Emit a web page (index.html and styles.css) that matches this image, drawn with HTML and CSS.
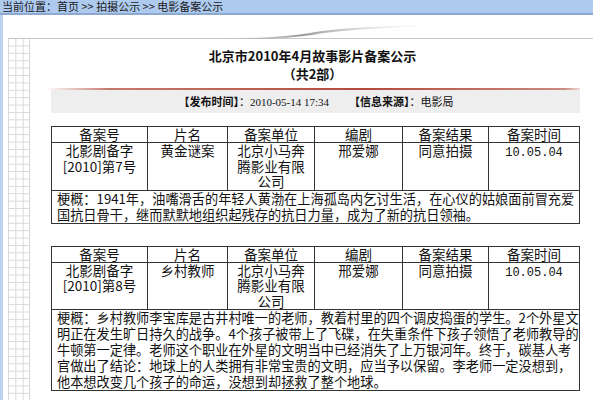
FILE: index.html
```html
<!DOCTYPE html>
<html lang="zh-CN">
<head>
<meta charset="utf-8">
<title>电影备案公示</title>
<link rel="stylesheet" href="styles.css">
</head>
<body>
<div class="crumb">当前位置：首页 &gt;&gt; 拍摄公示 &gt;&gt; 电影备案公示</div>
<div class="page">
  <div class="side"></div>
  <div class="panel">
    <svg class="swoosh" width="200" height="16" viewBox="0 0 200 16">
      <defs>
        <linearGradient id="sw" x1="0" x2="1" y1="0" y2="0">
          <stop offset="0" stop-color="#9a9a9a" stop-opacity="0"/>
          <stop offset="0.35" stop-color="#8c8c8c" stop-opacity="0.9"/>
          <stop offset="0.6" stop-color="#b0b0b0" stop-opacity="0.6"/>
          <stop offset="1" stop-color="#d0d0d0" stop-opacity="0"/>
        </linearGradient>
      </defs>
      <path d="M0,15 Q50,15 80,10 Q110,4 200,2 L200,3 Q112,6 82,12 Q50,16.5 0,16 Z" fill="url(#sw)"/>
    </svg>
    <div class="frame">
      <div class="grid"></div>
      <div class="content">
        <h1 class="title">北京市2010年4月故事影片备案公示</h1>
        <div class="subtitle">（共2部）</div>
        <div class="redline"></div>
        <div class="meta"><b>【发布时间】</b>：<span class="num">2010-05-14 17:34</span><span class="gap"></span><b>【信息来源】</b>：电影局</div>

        <table class="rec">
          <colgroup><col class="c1"><col class="c2"><col class="c3"><col class="c4"><col class="c5"><col class="c6"></colgroup>
          <tr class="head"><td>备案号</td><td>片名</td><td>备案单位</td><td>编剧</td><td>备案结果</td><td>备案时间</td></tr>
          <tr class="data"><td>北影剧备字<br>[2010]第7号</td><td>黄金谜案</td><td>北京小马奔<br>腾影业有限<br>公司</td><td>邢爱娜</td><td>同意拍摄</td><td><span class="mono">10.05.04</span></td></tr>
          <tr><td colspan="6" class="sum">梗概：1941年，油嘴滑舌的年轻人黄渤在上海孤岛内乞讨生活，在心仪的姑娘面前冒充爱<br>国抗日骨干，继而默默地组织起残存的抗日力量，成为了新的抗日领袖。</td></tr>
        </table>

        <table class="rec second">
          <colgroup><col class="c1"><col class="c2"><col class="c3"><col class="c4"><col class="c5"><col class="c6"></colgroup>
          <tr class="head"><td>备案号</td><td>片名</td><td>备案单位</td><td>编剧</td><td>备案结果</td><td>备案时间</td></tr>
          <tr class="data"><td>北影剧备字<br>[2010]第8号</td><td>乡村教师</td><td>北京小马奔<br>腾影业有限<br>公司</td><td>邢爱娜</td><td>同意拍摄</td><td><span class="mono">10.05.04</span></td></tr>
          <tr><td colspan="6" class="sum">梗概：乡村教师李宝库是古井村唯一的老师，教着村里的四个调皮捣蛋的学生。2个外星文<br>明正在发生旷日持久的战争。4个孩子被带上了飞碟，在失重条件下孩子领悟了老师教导的<br>牛顿第一定律。老师这个职业在外星的文明当中已经消失了上万银河年。终于，碳基人考<br>官做出了结论：地球上的人类拥有非常宝贵的文明，应当予以保留。李老师一定没想到，<br>他本想改变几个孩子的命运，没想到却拯救了整个地球。</td></tr>
        </table>
      </div>
    </div>
  </div>
</div>
</body>
</html>
```

FILE: styles.css
```css
* { box-sizing: border-box; }
html, body { margin: 0; padding: 0; background: #fff; }
body {
  font-family: "Noto Sans CJK SC", "Noto Sans", sans-serif;
  color: #111;
  height: 400px;
  overflow: hidden;
}
.crumb {
  height: 15px;
  background: #aecbef;
  border-bottom: 2px solid #8ea9cf;
  font-size: 11px;
  line-height: 12px;
  padding-left: 2px;
  color: #1a1a1a;
  white-space: nowrap;
  overflow: hidden;
}
.page {
  display: flex;
  height: 385px;
}
.side {
  width: 3px;
  background: #bcd3f0;
}
.panel {
  position: relative;
  flex: 1;
  margin-left: 5px;
  padding-top: 23px;
}
.swoosh {
  position: absolute;
  left: 222px;
  top: 8px;
}
.frame {
  display: flex;
  border-top: 1px solid #c8c8c8;
  height: 362px;
}
.grid {
  width: 22px;
  background-color: #fff;
  background-image:
    linear-gradient(90deg, #d8d8d8 1px, transparent 1px),
    linear-gradient(0deg, #d8d8d8 1px, transparent 1px);
  background-size: 7.4px 7.4px;
  border-right: 1px solid #d8d8d8;
}
.content {
  width: 535px;
  margin-left: 15px;
}
.title {
  margin: 8px 0 0;
  font-size: 13px;
  line-height: 18px;
  font-weight: bold;
  text-align: center;
}
.subtitle {
  font-size: 13px;
  line-height: 18px;
  font-weight: bold;
  text-align: center;
}
.redline {
  margin-top: 5px;
  height: 2px;
  background: linear-gradient(90deg, rgba(200,120,110,0), #c47a6e 12%, #b24a3c 60%, #c98a80 97%, rgba(220,170,160,0.4));
}
.meta {
  margin-left: 6px;
  height: 23px;
  background: #eeeeee;
  font-size: 11px;
  line-height: 22px;
  text-align: center;
  color: #111;
  padding-left: 1px;
}
.meta b { font-weight: bold; }
.meta .num { font-family: "Liberation Serif", serif; font-size: 11px; }
.meta .gap { display: inline-block; width: 20px; }
.rec {
  margin: 13px 0 0 6px;
  width: 528px;
  border-collapse: collapse;
  table-layout: fixed;
  font-size: 13.5px;
  line-height: 15.5px;
  border: 1px solid #333;
}
.rec.second { margin-top: 22px; }
.rec td {
  border: 1px solid #333;
  padding: 0;
  text-align: center;
  vertical-align: top;
  color: #111;
}
.rec .head td { line-height: 15px; }
.rec .sum {
  text-align: left;
  padding-left: 5px;
  white-space: nowrap;
  line-height: 16px;
  font-size: 13.2px;
}
.c1 { width: 96px; }
.c2 { width: 80px; }
.c3 { width: 87px; }
.c4 { width: 88px; }
.c5 { width: 86px; }
.c6 { width: 91px; }
.mono { font-family: "Liberation Mono", monospace; font-size: 12px; }
```
